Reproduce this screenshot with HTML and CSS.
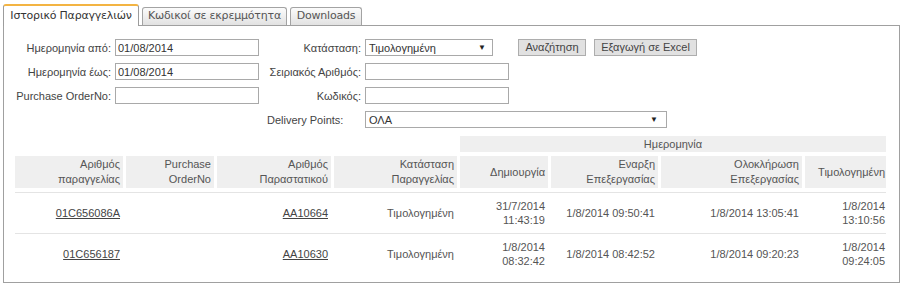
FILE: index.html
```html
<!DOCTYPE html>
<html lang="el">
<head>
<meta charset="utf-8">
<title>Ιστορικό Παραγγελιών</title>
<link rel="stylesheet" href="styles.css">
</head>
<body>
<div class="tabs">
  <div class="tab active">Ιστορικό Παραγγελιών</div>
  <div class="tab tab-codes">Κωδικοί σε εκρεμμότητα</div>
  <div class="tab tab-dl">Downloads</div>
</div>
<div class="panel">
  <div class="filters">
    <label class="lbl">Ημερομηνία από:</label>
    <div class="field"><input class="txt" type="text" value="01/08/2014"></div>
    <label class="lbl">Κατάσταση:</label>
    <div class="field actions">
      <div class="select sel-status"><span>Τιμολογημένη</span><span class="arrow">▼</span></div>
      <button class="btn btn-search">Αναζήτηση</button>
      <button class="btn">Εξαγωγή σε Excel</button>
    </div>

    <label class="lbl">Ημερομηνία έως:</label>
    <div class="field"><input class="txt" type="text" value="01/08/2014"></div>
    <label class="lbl">Σειριακός Αριθμός:</label>
    <div class="field"><input class="txt" type="text" value=""></div>

    <label class="lbl">Purchase OrderNo:</label>
    <div class="field"><input class="txt" type="text" value=""></div>
    <label class="lbl">Κωδικός:</label>
    <div class="field"><input class="txt" type="text" value=""></div>

    <div></div>
    <div></div>
    <label class="lbl lbl-left">Delivery Points:</label>
    <div class="field"><div class="select sel-delivery"><span>ΟΛΑ</span><span class="arrow">▼</span></div></div>
  </div>

  <table class="grid">
    <colgroup>
      <col style="width:108px">
      <col style="width:91px">
      <col style="width:117px">
      <col style="width:126px">
      <col style="width:91px">
      <col style="width:110px">
      <col style="width:144px">
      <col style="width:84px">
    </colgroup>
    <thead>
      <tr>
        <td class="blank" colspan="4"></td>
        <th class="super" colspan="4">Ημερομηνία</th>
      </tr>
      <tr>
        <th class="sub first">Αριθμός<br>παραγγελίας</th>
        <th class="sub">Purchase<br>OrderNo</th>
        <th class="sub">Αριθμός<br>Παραστατικού</th>
        <th class="sub">Κατάσταση<br>Παραγγελίας</th>
        <th class="sub">Δημιουργία</th>
        <th class="sub">Εναρξη<br>Επεξεργασίας</th>
        <th class="sub">Ολοκλήρωση<br>Επεξεργασίας</th>
        <th class="sub last">Τιμολογημένη</th>
      </tr>
    </thead>
    <tbody>
      <tr>
        <td><a href="#">01C656086A</a></td>
        <td></td>
        <td><a href="#">AA10664</a></td>
        <td>Τιμολογημένη</td>
        <td>31/7/2014<br>11:43:19</td>
        <td>1/8/2014 09:50:41</td>
        <td>1/8/2014 13:05:41</td>
        <td class="last">1/8/2014<br>13:10:56</td>
      </tr>
      <tr>
        <td><a href="#">01C656187</a></td>
        <td></td>
        <td><a href="#">AA10630</a></td>
        <td>Τιμολογημένη</td>
        <td>1/8/2014<br>08:32:42</td>
        <td>1/8/2014 08:42:52</td>
        <td>1/8/2014 09:20:23</td>
        <td class="last">1/8/2014<br>09:24:05</td>
      </tr>
    </tbody>
  </table>
</div>
</body>
</html>
```

FILE: styles.css
```css
* { box-sizing: border-box; }

body {
  margin: 0;
  background: #fff;
  font-family: "Liberation Sans", Arial, sans-serif;
  font-size: 11px;
  color: #444;
}

/* Tabs */
.tabs {
  display: flex;
  align-items: flex-start;
  gap: 3px;
  padding: 4px 0 0 3px;
  height: 26px;
}

.tab {
  font-family: "DejaVu Sans", Verdana, sans-serif;
  font-size: 11px;
  letter-spacing: -0.2px;
  color: #555;
  text-align: center;
  white-space: nowrap;
  margin-top: 3px;
  height: 18px;
  line-height: 16px;
  border: 1px solid #a3a3a3;
  border-bottom: none;
  border-radius: 3px 3px 0 0;
  background: linear-gradient(#fbfbfb, #e2e2e2);
}

.tab.active {
  position: relative;
  z-index: 1;
  margin-top: 0;
  height: 22px;
  width: 136px;
  line-height: 19px;
  color: #333;
  background: #fff;
  border-color: #9c9c9c;
  border-top: 2px solid #f3b443;
}

.tab-codes { width: 145px; }
.tab-dl { width: 72px; }

/* Panel */
.panel {
  margin: -1px 0 0 3px;
  width: 897px;
  height: 258px;
  border: 1px solid #a0a0a0;
  padding: 13px 11px 0;
}

/* Filter form */
.filters {
  display: grid;
  grid-template-columns: 100px 152px 98px 1fr;
  grid-auto-rows: 17px;
  row-gap: 7px;
  align-items: center;
}

.lbl {
  text-align: right;
  padding-right: 4px;
  color: #444;
  white-space: nowrap;
}

.lbl-left { text-align: left; }

.field { display: flex; align-items: center; height: 17px; }

.txt {
  width: 144px;
  height: 17px;
  margin: 0;
  padding: 0 2px;
  border: 1px solid #a9a9a9;
  font-family: "Liberation Sans", Arial, sans-serif;
  font-size: 11px;
  color: #333;
  background: #fff;
}

.select {
  display: flex;
  justify-content: space-between;
  align-items: center;
  height: 17px;
  padding: 0 6px 0 3px;
  border: 1px solid #a9a9a9;
  background: #fff;
  color: #333;
}

.select .arrow { font-size: 8px; color: #222; }

.sel-status { width: 128px; }
.sel-delivery { width: 302px; padding-right: 8px; }

.btn {
  height: 17px;
  margin: 0;
  padding: 0 5px;
  border: 1px solid #adadad;
  background: #e1e1e1;
  font-family: "Liberation Sans", Arial, sans-serif;
  font-size: 11px;
  color: #444;
  line-height: 15px;
}

.btn-search { margin-left: 25px; margin-right: 8px; width: 68px; }
.actions .btn:last-child { width: 103px; }

/* Results grid */
.grid {
  margin-top: 8px;
  width: 871px;
  table-layout: fixed;
  border-collapse: separate;
  border-spacing: 0;
  color: #555;
}

.grid th {
  font-weight: normal;
  background: #efefef;
  color: #555;
  text-align: right;
  border-left: 3px solid #fff;
}

.grid th.super {
  height: 16px;
  line-height: 16px;
  text-align: center;
  padding: 0;
}

.grid th.sub {
  height: 40px;
  line-height: 15px;
  padding: 1px 3px;
  vertical-align: middle;
  border-top: 4px solid #fff;
  border-bottom: 4px solid #fff;
}

.grid th.first { border-left: none; }
.grid th.last { padding-right: 1px; }

.grid td {
  text-align: right;
  line-height: 14px;
  padding: 6px 3px;
  height: 41px;
  border-top: 1px solid #e4e4e4;
  vertical-align: middle;
  white-space: nowrap;
}

.grid td.blank { border: none; padding: 0; height: 16px; }
.grid td.last { padding-right: 1px; }

.grid a { color: #444; text-decoration: underline; }
```
